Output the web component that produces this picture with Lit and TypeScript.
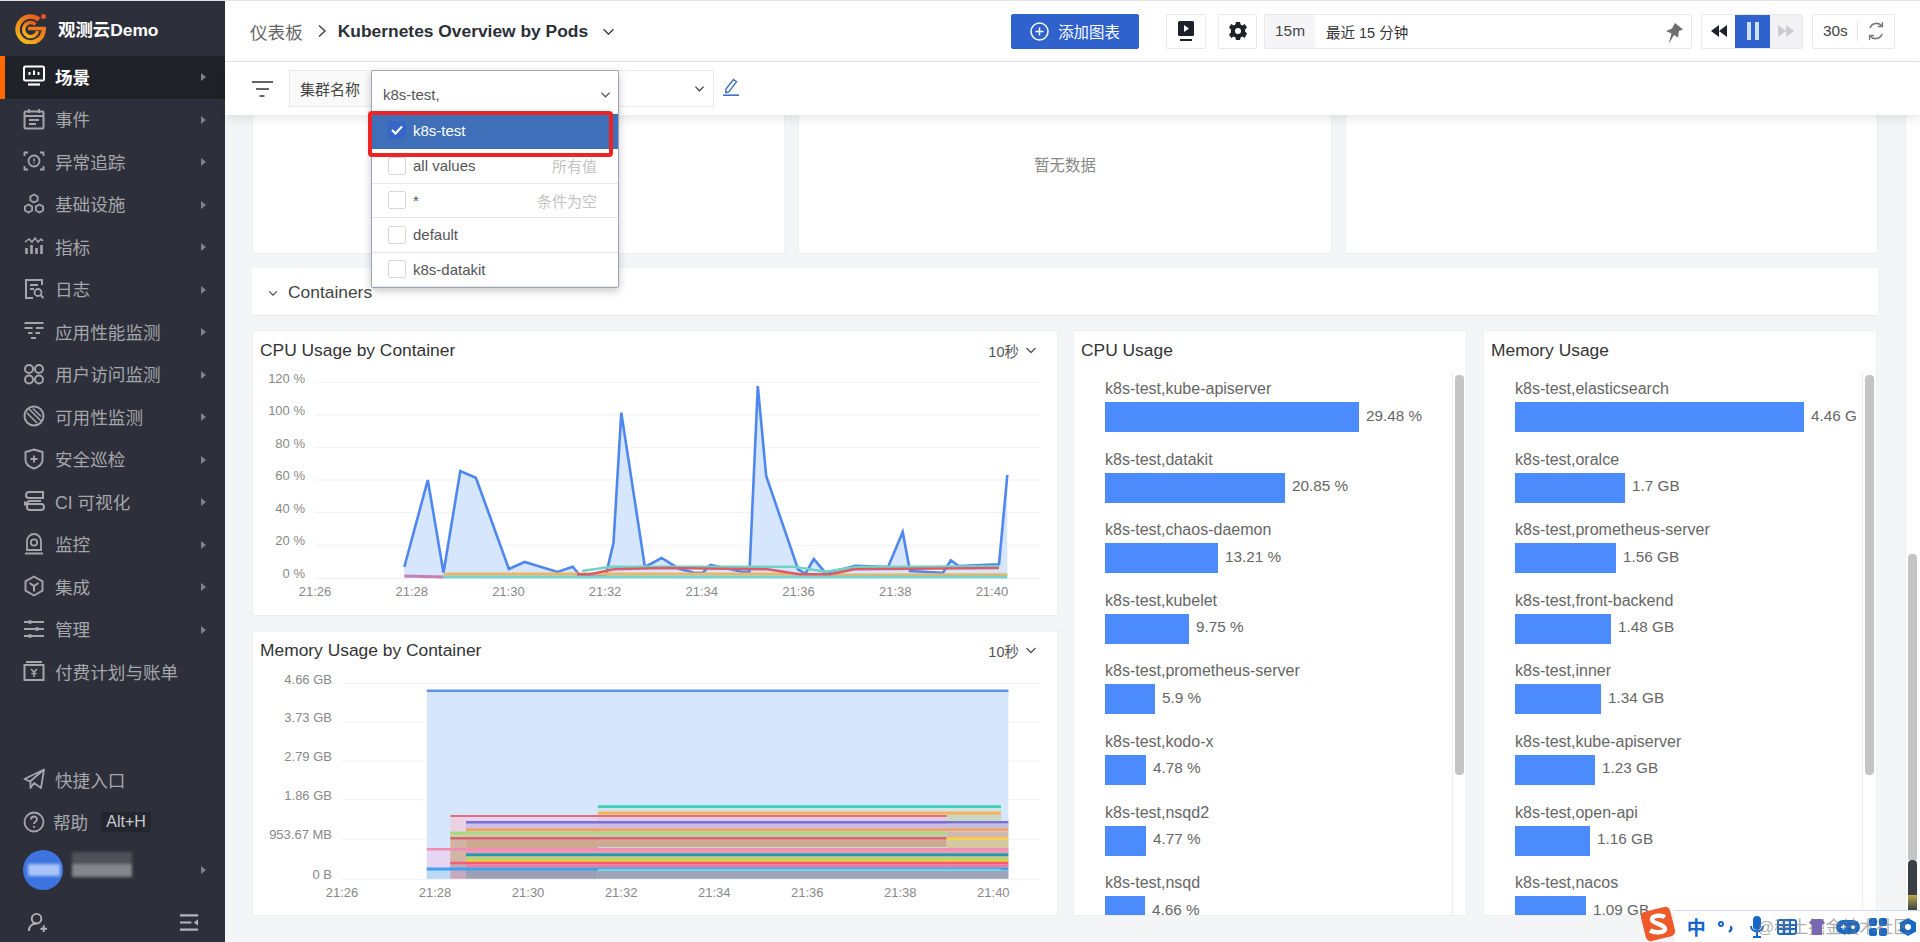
import { LitElement, html, css, svg } from "lit";
import { customElement } from "lit/decorators.js";

const ico = (body: unknown, w = 22) => html`<svg class="ic" width=${w} height=${w} viewBox="0 0 22 22" fill="none" stroke="currentColor" stroke-width="1.7">${body}</svg>`;

const navIcons: Record<string, unknown> = {
  scene: svg`<rect x="1" y="1.5" width="20" height="14" rx="1.5" stroke-width="2"/><path d="M6.5 10V7M11 10V5.5M15.5 10V7" stroke-width="2"/><path d="M5 19.5h12" stroke-width="2.2"/>`,
  event: svg`<rect x="1.5" y="3.5" width="19" height="17" rx="1" stroke-width="2"/><path d="M6 1v4M16 1v4M1.5 8h19M6 12h10M6 16h7" stroke-width="1.8"/>`,
  trace: svg`<path d="M1.5 6V2.5h3.5M17 2.500h3.500V6M1.500 16v3.500h3.500M17 19.500h3.500V16" stroke-width="1.800"/><circle cx="11" cy="11" r="5.500" stroke-width="1.800"/><path d="M11 8.500v3M11 12.600v1" stroke-width="1.500"/>`,
  infra: svg`<path d="M11 1.500l3.600 2v4l-3.600 2-3.600-2v-4zM5.500 11.500l3.600 2v4l-3.600 2-3.600-2v-4zM16.500 11.500l3.600 2v4l-3.600 2-3.600-2v-4z" stroke-width="1.800"/>`,
  metric: svg`<path d="M2 7l4-3 3 3 3-4 3 4 3-3 2 2" stroke-width="1.500"/><path d="M3.500 19v-6M8.500 19v-9M13.500 19v-6M18.500 19v-9" stroke-width="2.600"/>`,
  log: svg`<path d="M19 7V2H3v18h7" stroke-width="2"/><path d="M7 7h8M7 11h4" stroke-width="1.800"/><circle cx="15" cy="14.500" r="3.500" stroke-width="1.800"/><path d="M17.500 17l3 3" stroke-width="2"/>`,
  apm: svg`<path d="M1.500 3h19M1.500 8h8M13 8h7.500M5 13h4.500M12.500 13H17M8 18h5" stroke-width="2"/>`,
  rum: svg`<circle cx="6" cy="6" r="4" stroke-width="2"/><circle cx="16" cy="6" r="4" stroke-width="2"/><circle cx="6" cy="16.500" r="4" stroke-width="2"/><circle cx="16" cy="16.500" r="4" stroke-width="2"/>`,
  synth: svg`<circle cx="11" cy="11" r="9.500" stroke-width="2"/><path d="M6 4l12 12M4 8l10 10M10 3.500l8 8" stroke-width="1.600"/>`,
  sec: svg`<path d="M11 1.500l8.500 2.500v8c0 4-4 7-8.500 8.500C6.500 19 2.500 16 2.500 12V4z" stroke-width="1.900"/><path d="M11 7.500v7M7.500 11h7" stroke-width="1.900"/>`,
  ci: svg`<path d="M6 2h14v6H6a3 3 0 010-6zM6 8h12M4 14a3 3 0 013-3h11M2 11.500v4M4 14h14a3 3 0 010 6H7a3 3 0 01-3-3z" stroke-width="2"/>`,
  mon: svg`<path d="M4 17V8a7 7 0 0114 0v9z" stroke-width="1.800"/><circle cx="11" cy="9.500" r="3.200" stroke-width="1.800"/><path d="M2 20.500h18" stroke-width="2"/>`,
  integ: svg`<path d="M11 1.500l8.500 4.800v9.400L11 20.500l-8.500-4.800V6.300z" stroke-width="1.900"/><path d="M6.500 8l4.500 3 4.500-3M11 11v5.500" stroke-width="2"/>`,
  admin: svg`<path d="M1 4h20M1 11h20M1 18h20" stroke-width="1.800"/><circle cx="7" cy="4" r="2" fill="currentColor" stroke="none"/><circle cx="14" cy="11" r="2" fill="currentColor" stroke="none"/><circle cx="7" cy="18" r="2" fill="currentColor" stroke="none"/>`,
  bill: svg`<rect x="1.500" y="5" width="19" height="15" stroke-width="2"/><path d="M3 2h16" stroke-width="2"/><path d="M8 9l3 3 3-3M11 12v5M8.500 13.500h5" stroke-width="1.600"/>`,
  plane: svg`<path d="M21 1.500L1.500 11l5.500 2.500L21 1.500zM21 1.500L18 20l-7-5-3.500 5v-6.500" stroke-width="1.800" stroke-linejoin="round"/>`,
  help: svg`<circle cx="11" cy="11" r="9.500" stroke-width="1.800"/><path d="M8 8.500a3 3 0 116 0c0 2-3 2-3 4.500" stroke-width="1.800"/><path d="M11 15v1.800" stroke-width="1.900"/>`,
};

const nav: [string, string][] = [
  ["scene", "场景"], ["event", "事件"], ["trace", "异常追踪"], ["infra", "基础设施"], ["metric", "指标"],
  ["log", "日志"], ["apm", "应用性能监测"], ["rum", "用户访问监测"], ["synth", "可用性监测"], ["sec", "安全巡检"],
  ["ci", "CI 可视化"], ["mon", "监控"], ["integ", "集成"], ["admin", "管理"], ["bill", "付费计划与账单"],
];

const cpuBars: [string, string, number][] = [
  ["kube-apiserver", "29.48 %", 254], ["datakit", "20.85 %", 180], ["chaos-daemon", "13.21 %", 113], ["kubelet", "9.75 %", 84],
  ["prometheus-server", "5.9 %", 50], ["kodo-x", "4.78 %", 41], ["nsqd2", "4.77 %", 41], ["nsqd", "4.66 %", 40],
];
const memBars: [string, string, number][] = [
  ["elasticsearch", "4.46 GB", 289], ["oralce", "1.7 GB", 110], ["prometheus-server", "1.56 GB", 101], ["front-backend", "1.48 GB", 96],
  ["inner", "1.34 GB", 86], ["kube-apiserver", "1.23 GB", 80], ["open-api", "1.16 GB", 75], ["nacos", "1.09 GB", 71],
];

const cx = (X: number) => +(250 + X / 1.912).toFixed(1);
const cpuY = (Y: number) => +(330 + Y / 3).toFixed(1);
const memY = (Y: number) => +(630 + Y / 3).toFixed(1);
const pts = (a: number[][], fy: (n: number) => number) => a.map(([x, y]) => `${cx(x)},${fy(y)}`).join(" ");

const blue = [[295,708],[340,447],[370,725],[402,420],[432,440],[495,714],[525,693],[588,723],[617,707],[632,735],[680,735],[695,635],[710,245],[755,708],[787,681],[820,713],[850,725],[866,725],[880,702],[900,708],[940,722],[955,722],[971,165],[987,435],[1048,715],[1062,728],[1078,684],[1100,725],[1140,712],[1158,704],[1220,708],[1248,603],[1262,720],[1325,725],[1340,688],[1355,705],[1432,700],[1448,432]];
const cpuLines: [number[][], string, number][] = [
  [[[370,729],[1030,729],[1100,732],[1448,731]], "#f0b45c", 3],
  [[[295,735],[370,738]], "#c77fb4", 3],
  [[[370,738],[1448,738]], "#79d2cf", 3],
  [[[635,720],[690,707],[1040,707],[1100,722],[1160,708],[1432,706]], "#6fd4c4", 2.500],
  [[[625,730],[650,730],[695,715],[790,711],[990,715],[1050,730],[1110,730],[1155,715],[1432,711]], "#dc5a6a", 2.500],
];

const memBands: [number, number, number, number, string][] = [
  [338,383,652,711,"#e6d6f2"],[338,383,711,740,"#bcd9f8"],
  [383,413,552,740,"#ead2e4"],[383,413,603,619,"#c6d6a8"],[383,413,619,690,"#d2b4a4"],[383,413,690,740,"#c8a8bc"],
  [413,665,555,571,"#ecd4f0"],[413,665,571,590,"#cdbfe6"],[413,665,596,619,"#c3cf9e"],[413,665,619,648,"#cbaa90"],[413,665,652,665,"#ee9ab2"],[413,665,672,681,"#d3c68c"],[413,665,700,708,"#e58aa8"],[413,665,714,740,"#9da0b2"],
  [665,1332,527,543,"#d3e3ea"],[665,1332,547,552,"#eccab4"],[665,1332,555,570,"#e3c9df"],[665,1332,573,590,"#ccbbe0"],[665,1332,596,616,"#bfcf9f"],[665,1332,622,646,"#cdab92"],[665,1332,652,665,"#ee9ab2"],[665,1332,672,680,"#cfc88e"],[665,1332,700,708,"#e58aa8"],[665,1450,717,740,"#9da3b4"],
  [1332,1436,527,540,"#d0e4e4"],[1332,1436,546,568,"#ccd6c0"],[1332,1450,575,590,"#c3bedc"],[1332,1450,598,615,"#d0b8b4"],[1332,1450,622,648,"#d6c8a0"],[1332,1450,652,665,"#ee9ab2"],[1332,1450,672,680,"#cfc88e"],[1332,1450,700,708,"#e58aa8"],
];
const memLines: [number, number, number, string, number][] = [
  [338,1450,176,"#5f93e6",2.500],
  [665,1436,524,"#3fd0ba",2.800],[665,1436,543,"#f4b45e",2.800],[383,1332,552,"#e46c7c",2],
  [413,1450,571,"#7a70d4",2.500],[413,1450,593,"#f3a063",2.800],[383,413,603,"#a3d97a",2.800],[413,1332,603,"#a9d983",1.500],
  [383,1332,619,"#de6078",2.500],[1332,1450,619,"#f5d044",2.800],[338,1450,652,"#f08db0",2.500],
  [413,1450,668,"#1f9db2",3],[413,1450,682,"#a6dc72",2.500],[413,1450,687,"#f6c83f",2.500],[383,1450,693,"#f05f72",2.500],[413,1450,700,"#ef74a0",2],
  [338,1450,711,"#3da2f0",3],[665,1436,714,"#78cfe2",2.500],
];

@customElement("app-root")
export class AppRoot extends LitElement {
  static styles = css`
    :host { display: block; width: 1920px; height: 942px; overflow: hidden; font-family: "Liberation Sans", "Noto Sans CJK SC", sans-serif; position: relative; background: #f3f5f7; }
    * { box-sizing: border-box; }
    .app { display: flex; height: 942px; border-top: 1px solid #e2e2e2; }
    .side { width: 225px; flex: none; background: #2d303b; color: #a5a6aa; display: flex; flex-direction: column; height: 100%; }
    .logo { height: 55px; display: flex; align-items: center; padding-left: 15px; gap: 11px; color: #fff; font-weight: 700; font-size: 17.400px; }
    .item { height: 42.500px; display: flex; align-items: center; padding: 0 0 2px 23px; font-size: 17.600px; position: relative; flex: none; }
    .item .ic { margin-right: 10px; flex: none; }
    .item.on { background: #1f2229; color: #fff; font-weight: 700; }
    .item.on::before { content: ""; position: absolute; left: 0; top: 0; bottom: 0; width: 5px; background: #ff6a00; }
    .item.help { margin-bottom: 3px; }
    .caret { position: absolute; left: 201px; top: 50%; margin-top: -4px; width: 0; height: 0; border-left: 5px solid #80828a; border-top: 4px solid transparent; border-bottom: 4px solid transparent; }
    .spacer { flex: 1; }
    .kbd { margin-left: 13px; background: #23262e; color: #c9cacc; font-size: 16px; padding: 0 5px; height: 20px; line-height: 20px; }
    .user { height: 46px; position: relative; padding-left: 23px; display: flex; align-items: center; flex: none; margin-bottom: 9px; }
    .avatar { width: 40px; height: 40px; border-radius: 50%; background: #3d74e0; flex: none; }
    .blur1 { position: absolute; left: 28px; top: 17px; width: 32px; height: 12px; background: #a9c4f6; filter: blur(1.500px); }
    .blur2 { position: absolute; left: 72px; top: 5px; width: 60px; height: 25px; background: linear-gradient(#4f5158 50%, #85868b 50%); filter: blur(1.500px); }
    .sidefoot { height: 40px; display: flex; align-items: center; justify-content: space-between; padding: 0 25px 0 27px; flex: none; color: #b3b4b8; }
    .main { flex: 1; min-width: 0; display: flex; flex-direction: column; background: #fff; }
    .head { height: 61px; flex: none; border-bottom: 1px solid #e3e4e7; display: flex; align-items: center; padding: 0 25px 0 25px; color: #333; }
    .crumb { font-size: 17.600px; color: #666; }
    .sep { margin: 0 10px 0 13px; display: flex; color: #444; }
    .title { font-size: 17.400px; font-weight: 700; color: #2b2f36; }
    .titlechev { margin-left: 14px; display: flex; color: #444; }
    .tools { margin-left: auto; display: flex; align-items: stretch; height: 35px; }
    .tbtn { border: 1px solid #e8e9ec; border-radius: 2px; display: flex; align-items: center; justify-content: center; background: #fff; color: #222; }
    .add { width: 128px; background: #2f62cc; border-color: #2f62cc; color: #fff; font-size: 15.400px; gap: 9px; margin-right: 27px; }
    .play { width: 40px; margin-right: 12px; }
    .gear { width: 39px; margin-right: 7px; }
    .time { width: 428px; margin-right: 9px; justify-content: flex-start; font-size: 15.400px; position: relative; }
    .q { width: 50px; height: 100%; background: #f5f5f8; display: flex; align-items: center; justify-content: center; color: #444; font-size: 15.400px; }
    .rng { padding-left: 11px; color: #333; font-size: 14.500px; }
    .pin { position: absolute; right: 8px; top: 8px; color: #6f6f6f; display: flex; }
    .seek { width: 102px; margin-right: 9px; justify-content: flex-start; overflow: hidden; }
    .seek > div { height: 100%; display: flex; align-items: center; justify-content: center; }
    .s1 { width: 33px; }
    .s2 { width: 35px; background: #2f62cc; }
    .s3 { flex: 1; background: #f2f2f5; }
    .auto { width: 83px; font-size: 15.400px; color: #444; justify-content: flex-start; padding-left: 10px; }
    .vsep { width: 1px; height: 20px; background: #e5e5e5; margin: 0 9px; }
    .filter { height: 53px; flex: none; display: flex; align-items: flex-start; padding: 8px 0 0 27px; position: relative; z-index: 3; background: #fff; box-shadow: 0 4px 10px rgba(0,0,0,.09); }
    .ficon { width: 21px; margin: 11px 16px 0 0; display: flex; color: #666; }
    .flabel { width: 82px; height: 37px; background: #fafafa; border: 1px solid #e8e9ec; border-right: 0; font-size: 15px; color: #444; display: flex; align-items: center; padding-left: 10px; }
    .fsel { width: 343px; height: 37px; border: 1px solid #e8e9ec; border-left: 0; display: flex; align-items: center; justify-content: flex-end; padding: 0 8px 0 0; color: #444; }
    .pencil { margin: 8px 0 0 9px; color: #3f6fc0; display: flex; }
    .drop { position: absolute; left: 146px; top: 8px; width: 248px; height: 218px; background: #fff; border: 1px solid #9da4b6; border-radius: 2px; box-shadow: 0 3px 8px rgba(0,0,0,.22); z-index: 5; font-size: 15px; color: #555; }
    .dinput { height: 43px; display: flex; align-items: center; justify-content: space-between; padding: 3px 7px 0 11px; color: #555; }
    .opt { display: flex; align-items: center; height: 34.500px; padding: 0 21px 0 16px; border-bottom: 1px solid #e6e6e6; position: relative; }
    .opt:last-child { border-bottom: 0; }
    .opt.sel { background: #3f6fb9; color: #fff; border-bottom: 0; height: 35px; padding-bottom: 3px; }
    .box { width: 18px; height: 18px; border: 1px solid #d8d8d8; border-radius: 2px; margin-right: 7px; background: #fff; flex: none; display: flex; align-items: center; justify-content: center; }
    .sel .box { background: #3566c8; border-color: #3566c8; }
    .hint { margin-left: auto; color: #c4c4c4; }
    .redmark { position: absolute; left: -4px; top: 40px; width: 245px; height: 46px; border: 4px solid #ee2323; border-radius: 4px; pointer-events: none; }
    .body { flex: 1; display: flex; min-height: 0; }
    .content { flex: 1; padding-left: 27px; background: #f3f5f7; overflow: hidden; }
    .vbar { width: 15px; flex: none; background: #fff; border-left: 1px solid #eceef0; padding: 439px 3px 0 2px; display: flex; flex-direction: column; }
    .vthumb { flex: 1; background: #c4c4c4; border-radius: 4px 4px 0 0; }
    .vdark { height: 50px; background: linear-gradient(#3c4044 70%, #b9a94c 70%, #3c4044 100%); border-radius: 4px 4px 0 0; margin-bottom: 32px; }
    .toprow { display: grid; grid-template-columns: 533px 534px 533px; column-gap: 13px; height: 139px; }
    .panel { background: #fff; border: 1px solid #eff0f2; border-top: 0; }
    .empty { display: flex; align-items: center; justify-content: center; font-size: 15.400px; color: #888; padding-bottom: 40px; }
    .group { margin-top: 14px; width: 1626px; height: 48px; background: #fff; border-bottom: 1px solid #ebecee; display: flex; align-items: center; padding: 2px 0 0 16px; font-size: 17.400px; color: #444; gap: 10px; }
    .charts { margin-top: 14px; display: grid; grid-template-columns: 806px 394px 395px; column-gap: 15px; }
    .left { display: flex; flex-direction: column; gap: 15px; }
    .card { background: #fff; border: 1px solid #eff0f2; overflow: hidden; position: relative; }
    .ctitle { height: 36px; padding: 0 0 0 7px; display: flex; align-items: center; font-size: 17.400px; color: #333; }
    .chart1 .ctitle, .bars .ctitle { padding-top: 2px; }
    .every { margin-left: auto; margin-right: 20px; display: flex; align-items: center; font-size: 14.500px; color: #555; gap: 6px; }
    .chart1 { height: 286px; }
    .chart2 { height: 285px; }
    .chart svg { display: block; }
    .bars { height: 586px; }
    .mem { width: 394px; margin-left: 1px; }
    .listwrap { display: flex; height: 549px; }
    .list { width: 372px; padding: 9px 0 0 31px; overflow: hidden; flex: none; }
    .bartrack { width: 15px; margin: 6px 0 0 6px; border-left: 1px solid #eceef0; padding: 2px 3px 0 2px; }
    .barthumb { height: 400px; width: 9px; background: #c4c4c4; border-radius: 4px; }
    .row { height: 70.600px; }
    .lbl { height: 26px; line-height: 26px; font-size: 16px; color: #666; white-space: nowrap; }
    .barline { display: flex; align-items: center; height: 30px; gap: 7px; white-space: nowrap; font-size: 15.300px; color: #666; }
    .barline span { padding-bottom: 3px; }
    .bar { height: 30px; background: #4b8bfb; flex: none; }
    .ime { position: absolute; left: 1673px; top: 910px; width: 247px; height: 32px; padding-left: 7px; background: #fff; border-top: 1px solid #cfdcec; border-left: 1px solid #e4ebf3; z-index: 8; display: flex; align-items: center; color: #1668c7; }
    .cell { width: 30.300px; flex: none; display: flex; justify-content: center; align-items: center; }
    .zh { font-size: 19px; font-weight: 700; }
    .wm { position: absolute; left: 1757px; top: 913px; font-size: 17px; color: rgba(120,120,120,.6); white-space: nowrap; z-index: 9; }
    .slogo { position: absolute; left: 1640px; top: 906px; width: 36px; height: 36px; z-index: 10; }
  `;

  private chev(size = 12) {
    return html`<svg width=${size} height=${size} viewBox="0 0 12 12" fill="none" stroke="currentColor" stroke-width="1.400"><path d="M1.500 4l4.500 4.500L10.500 4"/></svg>`;
  }

  private barsCard(title: string, rows: [string, string, number][], extra = "") {
    return html`<div class="card bars ${extra}">
      <div class="ctitle">${title}</div>
      <div class="listwrap">
        <div class="list">
          ${rows.map(r => html`<div class="row"><div class="lbl">k8s-test,${r[0]}</div><div class="barline"><div class="bar" style="width:${r[2]}px"></div><span>${r[1]}</span></div></div>`)}
        </div>
        <div class="bartrack"><div class="barthumb"></div></div>
      </div>
    </div>`;
  }

  private cpuChart() {
    const ys = [[155,"120 %"],[252,"100 %"],[350,"80 %"],[447,"60 %"],[545,"40 %"],[643,"20 %"],[742,"0 %"]] as [number,string][];
    const xs = ["21:26","21:28","21:30","21:32","21:34","21:36","21:38","21:40"];
    const first = blue[0], last = blue[blue.length - 1];
    const area = `${cx(first[0])},${cpuY(742)} ${pts(blue, cpuY)} ${cx(last[0])},${cpuY(742)}`;
    return html`<svg width="804" height="250" viewBox="253 366 804 250" font-family="Liberation Sans" font-size="13" fill="#888">
      ${ys.map(([y, t]) => svg`<line x1="315" x2="1040" y1=${cpuY(y)} y2=${cpuY(y)} stroke="#f1f1f1"/><text x="305" y=${cpuY(y)} text-anchor="end">${t}</text>`)}
      <polygon points=${area} fill="#d6e6fc"/>
      <polyline points=${pts(blue, cpuY)} fill="none" stroke="#4e87ee" stroke-width="2.600"/>
      ${cpuLines.map(([p, c, w]) => svg`<polyline points=${pts(p, cpuY)} fill="none" stroke=${c} stroke-width=${w}/>`)}
      ${xs.map((t, i) => svg`<text x=${315 + i * 96.700} y="595" text-anchor="middle">${t}</text>`)}
    </svg>`;
  }

  private memChart() {
    const ys = [[155,"4.66 GB"],[270,"3.73 GB"],[387,"2.79 GB"],[503,"1.86 GB"],[622,"953.67 MB"],[742,"0 B"]] as [number,string][];
    const xs = ["21:26","21:28","21:30","21:32","21:34","21:36","21:38","21:40"];
    return html`<svg width="804" height="249" viewBox="253 666 804 249" font-family="Liberation Sans" font-size="13" fill="#888">
      ${ys.map(([y, t]) => svg`<line x1="342" x2="1040" y1=${memY(y)} y2=${memY(y)} stroke="#f1f1f1"/><text x="332" y=${memY(y)} text-anchor="end">${t}</text>`)}
      <rect x=${cx(338)} y=${memY(176)} width=${cx(1450) - cx(338)} height=${memY(740) - memY(176)} fill="#d6e6fc"/>
      ${memBands.map(([a, b, c, d, f]) => svg`<rect x=${cx(a)} y=${memY(c)} width=${cx(b) - cx(a)} height=${memY(d) - memY(c)} fill=${f}/>`)}
      ${memLines.map(([a, b, y, c, w]) => svg`<line x1=${cx(a)} x2=${cx(b)} y1=${memY(y)} y2=${memY(y)} stroke=${c} stroke-width=${w}/>`)}
      ${xs.map((t, i) => svg`<text x=${342 + i * 93.050} y="895" text-anchor="middle">${t}</text>`)}
    </svg>`;
  }

  render() {
    return html`<div class="app">
      <aside class="side">
        <div class="logo">
          <svg width="32" height="31" viewBox="0 0 32 31" fill="none">
            <defs><linearGradient id="lg" x1="0.900" y1="0" x2="0.200" y2="1"><stop offset="0" stop-color="#e8541c"/><stop offset="1" stop-color="#f6b81c"/></linearGradient></defs>
            <path d="M24 6.500A13 13 0 1028.600 17" stroke="url(#lg)" stroke-width="4.500"/>
            <path d="M20.500 11.500A7 7 0 1022.500 18" stroke="url(#lg)" stroke-width="3.500"/>
            <path d="M13 15.500h18" stroke="#ee7a1c" stroke-width="3.500"/>
            <circle cx="28.500" cy="3.500" r="2.500" fill="#e8541c"/>
          </svg>
          <span>观测云Demo</span>
        </div>
        ${nav.map(([k, t], i) => html`<div class="item ${i === 0 ? "on" : ""}">${ico(navIcons[k])}<span>${t}</span>${i < 14 ? html`<i class="caret"></i>` : ""}</div>`)}
        <div class="spacer"></div>
        <div class="item">${ico(navIcons.plane)}<span>快捷入口</span></div>
        <div class="item help">${ico(navIcons.help)}<span style="margin-left:-2px">帮助</span><span class="kbd">Alt+H</span></div>
        <div class="user"><div class="avatar"></div><div class="blur1"></div><div class="blur2"></div><i class="caret"></i></div>
        <div class="sidefoot">
          ${ico(svg`<circle cx="10" cy="7" r="5" stroke-width="2"/><path d="M2 20c0-5 3.500-8 8-8M14 17.500h7M17.500 14v7" stroke-width="2"/>`, 21)}
          ${ico(svg`<path d="M1 3.500h19M1 18.500h19M1 11h12" stroke-width="2.200"/><path d="M20 7.500v7l-4.500-3.500z" fill="currentColor" stroke="none"/>`, 21)}
        </div>
      </aside>
      <div class="main">
        <header class="head">
          <span class="crumb">仪表板</span>
          <span class="sep"><svg width="12" height="14" viewBox="0 0 12 14" fill="none" stroke="currentColor" stroke-width="1.500"><path d="M3 1.500L9 7l-6 5.500"/></svg></span>
          <span class="title">Kubernetes Overview by Pods</span>
          <span class="titlechev">${this.chev(13)}</span>
          <div class="tools">
            <div class="tbtn add">
              <svg width="19" height="19" viewBox="0 0 19 19" fill="none" stroke="#fff" stroke-width="1.500"><circle cx="9.500" cy="9.500" r="8.500"/><path d="M9.500 5.500v8M5.500 9.500h8"/></svg>
              <span>添加图表</span>
            </div>
            <div class="tbtn play"><svg width="18" height="21" viewBox="0 0 18 21"><rect x="1" y="0" width="16" height="15" rx="1.500" fill="#1e2228"/><path d="M7 4l5 3.500L7 11z" fill="#fff"/><rect x="3" y="18" width="12" height="2" fill="#1e2228"/></svg></div>
            <div class="tbtn gear"><svg width="20" height="20" viewBox="0 0 20 20"><path fill-rule="evenodd" fill="#1e2228" d="M8 1h4l.6 2.600 1.800.8L16.700 3l2.300 3.500-1.900 1.900v2.200l1.900 1.900L16.700 17l-2.300-1.400-1.800.8L12 19H8l-.6-2.600-1.800-.8L3.300 17 1 13.500l1.900-1.900V8.400L1 6.500 3.300 3l2.300 1.400 1.800-.8zM10 7a3 3 0 100 6 3 3 0 000-6z"/></svg></div>
            <div class="tbtn time">
              <div class="q">15m</div><div class="rng">最近 15 分钟</div>
              <span class="pin"><svg width="18" height="20" viewBox="0 0 18 20"><path fill="currentColor" d="M10 0l8 6.500-4 1.500-1 6.500-4-2.500-4.500 7.500-.5-.3 2.500-8.700L1 8l6-2.500z"/></svg></span>
            </div>
            <div class="tbtn seek">
              <div class="s1"><svg width="16" height="12" viewBox="0 0 16 12" fill="#1e2228"><path d="M8 0v12L0 6zM16 0v12L8 6z"/></svg></div>
              <div class="s2"><svg width="14" height="18" viewBox="0 0 14 18" fill="#cfe0ff"><rect x="1" y="0" width="4" height="18"/><rect x="9" y="0" width="4" height="18"/></svg></div>
              <div class="s3"><svg width="16" height="12" viewBox="0 0 16 12" fill="#c9cbd1"><path d="M0 0v12l8-6zM8 0v12l8-6z"/></svg></div>
            </div>
            <div class="tbtn auto"><span>30s</span><span class="vsep"></span>
              <svg width="18" height="20" viewBox="0 0 18 20" fill="none" stroke="#777" stroke-width="1.600"><path d="M3 7a7 7 0 0112-2M15 13a7 7 0 01-12 2"/><path d="M15.500 1v4.500H11M2.500 19v-4.500H7" stroke-width="1.300"/></svg>
            </div>
          </div>
        </header>
        <div class="filter">
          <span class="ficon"><svg width="21" height="16" viewBox="0 0 21 16" fill="none" stroke="currentColor" stroke-width="2"><path d="M0 1h21M4 8h13M7.500 15h5"/></svg></span>
          <div class="flabel">集群名称</div>
          <div class="fsel">${this.chev(11)}</div>
          <span class="pencil"><svg width="16" height="18" viewBox="0 0 16 18" fill="none" stroke="currentColor" stroke-width="1.400"><path d="M10.500 1.500l3 2.200-7.500 10-3.300 1 .1-3.400z"/><path d="M0 17.200h16" stroke-width="1.600"/></svg></span>
          <div class="drop">
            <div class="dinput"><span>k8s-test,</span>${this.chev(11)}</div>
            <div class="opt sel"><span class="box"><svg width="12" height="10" viewBox="0 0 12 10" fill="none" stroke="#fff" stroke-width="2.200"><path d="M1 5l3.500 3.500L11 1.500"/></svg></span>k8s-test</div>
            <div class="opt"><span class="box"></span>all values<span class="hint">所有值</span></div>
            <div class="opt"><span class="box"></span>*<span class="hint">条件为空</span></div>
            <div class="opt"><span class="box"></span>default</div>
            <div class="opt"><span class="box"></span>k8s-datakit</div>
            <div class="redmark"></div>
          </div>
        </div>
        <div class="body">
          <div class="content">
            <div class="toprow">
              <div class="panel"></div>
              <div class="panel empty">暂无数据</div>
              <div class="panel"></div>
            </div>
            <div class="group">${this.chev(10)}<span>Containers</span></div>
            <div class="charts">
              <div class="left">
                <div class="card chart chart1">
                  <div class="ctitle">CPU Usage by Container<span class="every">10秒 ${this.chev(12)}</span></div>
                  ${this.cpuChart()}
                </div>
                <div class="card chart chart2">
                  <div class="ctitle">Memory Usage by Container<span class="every">10秒 ${this.chev(12)}</span></div>
                  ${this.memChart()}
                </div>
              </div>
              ${this.barsCard("CPU Usage", cpuBars)}
              ${this.barsCard("Memory Usage", memBars, "mem")}
            </div>
          </div>
          <div class="vbar"><div class="vthumb"></div><div class="vdark"></div></div>
        </div>
      </div>
    </div>
    <svg class="slogo" viewBox="0 0 36 36"><rect x="3" y="3" width="30" height="30" rx="5" fill="#f0592a" transform="rotate(-14 18 18)"/><path d="M25 11c-3-2-13-2-13 2.500S25 18 25 23c0 4-11 4-15 1.500" fill="none" stroke="#fff" stroke-width="4.500"/></svg>
    <div class="ime">
      <span class="cell zh">中</span>
      <span class="cell"><svg width="16" height="14" viewBox="0 0 16 14" fill="none" stroke="currentColor" stroke-width="2"><circle cx="3" cy="4" r="2"/><path d="M12 7c2 0 2 3-1 5" stroke-width="2.500"/></svg></span>
      <span class="cell"><svg width="16" height="22" viewBox="0 0 16 22" fill="none" stroke="currentColor" stroke-width="2"><rect x="5" y="1" width="6" height="12" rx="3" fill="currentColor"/><path d="M2 10c0 7 12 7 12 0M8 16v5M4 21h8"/></svg></span>
      <span class="cell"><svg width="20" height="16" viewBox="0 0 20 16" fill="none" stroke="currentColor" stroke-width="2"><rect x="1" y="1" width="18" height="14" rx="2"/><path d="M1 6h18M1 10h18M7 1v14M13 1v14"/></svg></span>
      <span class="cell"><svg width="16" height="18" viewBox="0 0 16 18"><path d="M3 1h10l3 4-3 2v10H3V7L0 5z" fill="#7a63c8"/></svg></span>
      <span class="cell"><svg width="24" height="14" viewBox="0 0 24 14"><rect x="0" y="0" width="24" height="14" rx="7" fill="currentColor"/><path d="M5 7h5M7.500 4.500v5" stroke="#fff" stroke-width="1.500"/><circle cx="17" cy="7" r="2" fill="#fff"/></svg></span>
      <span class="cell"><svg width="18" height="18" viewBox="0 0 18 18" fill="currentColor"><rect width="8" height="8" rx="2"/><rect x="10" width="8" height="8" rx="2"/><rect y="10" width="8" height="8" rx="2"/><rect x="10" y="10" width="8" height="8" rx="2"/></svg></span>
      <span class="cell"><svg width="18" height="18" viewBox="0 0 18 18"><path d="M9 0l8 4.500v9L9 18l-8-4.500v-9z" fill="currentColor"/><circle cx="9" cy="9" r="3" fill="#fff"/></svg></span>
    </div>
    <div class="wm">@稀土掘金技术社区</div>`;
  }
}
